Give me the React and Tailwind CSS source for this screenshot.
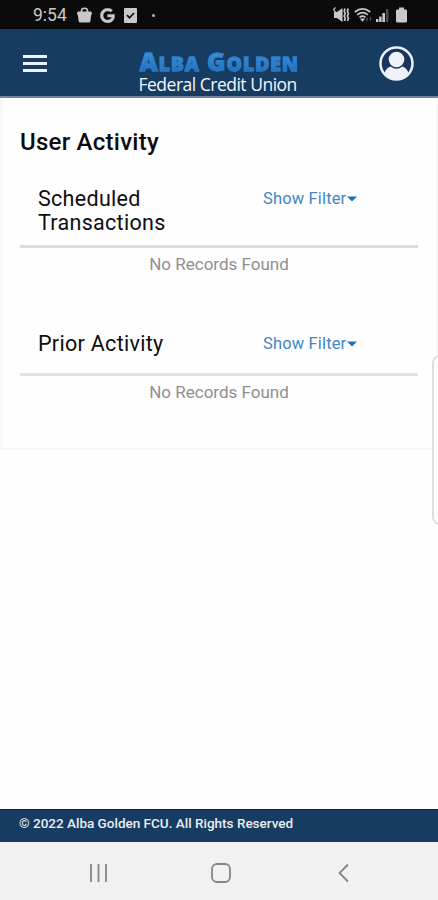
import { FaGoogle } from "react-icons/fa";

const StatusBar = () => {
  return (
    <div className="h-[29px] bg-[#0b0b0b] flex items-center justify-between pl-[33px] pr-[31px] pt-px text-[#c9c9c9]">
      <div className="flex items-center">
        <span className="w-[35px] pt-0.5 text-[17.5px] leading-none whitespace-nowrap">9:54</span>
        <svg className="ml-[9px]" width="15" height="16" viewBox="0 0 15 16" fill="currentColor">
          <path d="M0 6.2Q0 4.5 1.7 4.5H13.3Q15 4.5 15 6.2L14 9H1Z M1 9H14L13.4 14Q13.2 15.5 11.7 15.5H3.3Q1.8 15.5 1.6 14Z" />
          <path d="M4.5 5V3.8Q4.5 1.2 7.5 1.2T10.5 3.8V5" fill="none" stroke="currentColor" strokeWidth="1.6" />
        </svg>
        <FaGoogle className="ml-2 h-[15px] w-[15px]" stroke="currentColor" strokeWidth="16" />
        <svg className="ml-[9px]" width="13" height="15" viewBox="0 0 13 15">
          <rect width="13" height="15" rx="1" fill="currentColor" />
          <path d="M3 7.2L5.5 9.8L10 5" fill="none" stroke="#0b0b0b" strokeWidth="1.7" />
        </svg>
        <span className="ml-[15px] h-[3px] w-[3px] rounded-full bg-[#b5b5b5]" />
      </div>

      <div className="flex items-center">
        {/* Muted speaker */}
        <svg width="17" height="16" viewBox="0 0 17 16">
          <path d="M1 5H4L9.5 1V15L4 11H1Z" fill="currentColor" />
          <path d="M2.5 0.5L0.5 2.5L9 13.5" fill="none" stroke="currentColor" strokeWidth="1.2" />
          <path d="M12 1.5L11.2 4L12.2 6.5L11.2 9L12.2 11.5L11.4 14M15.2 1.5L14.4 4L15.4 6.5L14.4 9L15.4 11.5L14.6 14" fill="none" stroke="currentColor" strokeWidth="1.7" />
        </svg>
        {/* Wifi */}
        <svg className="ml-1" width="19" height="16" viewBox="0 0 19 16" fill="none" stroke="currentColor" strokeWidth="1.7">
          <path d="M0.8 5Q8.5-1.4 16.2 5M3.2 7.8Q8.5 3.6 13.8 7.8M5.6 10.3Q8.5 8 11.4 10.3" />
          <path d="M6.4 11.8L8.5 14.5L10.6 11.8Z" fill="currentColor" strokeWidth="0.5" />
          <path d="M13 10.5V14M16.5 13.5V10" strokeWidth="1.2" opacity="0.4" />
        </svg>
        {/* Signal */}
        <svg className="ml-[3px]" width="13" height="15" viewBox="0 0 13 15" fill="currentColor">
          <rect y="11" width="2.4" height="3" />
          <rect x="3.2" y="8.5" width="2.4" height="5.5" />
          <rect x="6.4" y="5" width="2.6" height="9" />
          <rect x="10" y="1" width="2.4" height="13" opacity="0.35" />
        </svg>
        {/* Battery */}
        <svg className="ml-[7px]" width="11" height="16" viewBox="0 0 11 16" fill="currentColor">
          <path d="M3 0.5H8V2.5H9.8Q11 2.5 11 3.7V14Q11 15.5 9.5 15.5H1.5Q0 15.5 0 14V3.7Q0 2.5 1.2 2.5H3Z" />
        </svg>
      </div>
    </div>
  );
};

const Header = () => {
  return (
    <header className="h-[69px] bg-[#173c61] border-b-2 border-[#7084a6] flex items-start justify-between pl-[23px] pr-6">
      <button className="mt-[26px] flex flex-col gap-[4px]" aria-label="Menu">
        <span className="h-[3px] w-6 bg-[#f1f1fa]" />
        <span className="h-[3px] w-6 bg-[#f1f1fa]" />
        <span className="h-[3px] w-6 bg-[#f1f1fa]" />
      </button>

      <div className="mt-[20px] ml-[9px] w-[160px] whitespace-nowrap">
        <div className="pl-[2px] font-['Open_Sans'] font-extrabold text-[25px] leading-6 tracking-[0.85px] bg-linear-to-b from-[#3f96df] to-[#1b69b8] bg-clip-text text-transparent [-webkit-text-stroke:0.8px_#2b7ecb]">
          A<span className="text-[19.5px]">LBA</span> G<span className="text-[19.5px]">OLDEN</span>
        </div>
        <div className="pl-px font-['Open_Sans'] text-[17.5px] leading-[17px] tracking-[-0.5px] text-[#f4f6fa]">
          Federal Credit Union
        </div>
      </div>

      <svg className="mt-[17px]" width="35" height="35" viewBox="0 0 35 35">
        <circle cx="17.5" cy="17.5" r="16" fill="#17365e" stroke="#eef1f7" strokeWidth="2.5" />
        <path d="M5.5 27Q7 22 11.5 20.5Q17.5 25 23.5 20.5Q28 22 29.5 27Q25 33 17.5 33T5.5 27Z" fill="#eef1f7" />
        <circle cx="17.5" cy="13.5" r="7.8" fill="#eef1f7" />
      </svg>
    </header>
  );
};

const ShowFilter = () => {
  return (
    <button className="flex items-center pt-px text-[16.5px] leading-6 text-[#4287c5] whitespace-nowrap">
      <span className="w-[84px] text-left tracking-[0.15px]">Show Filter</span>
      <svg width="10" height="6" viewBox="0 0 10 6">
        <path d="M0 0.5H10L5 5.5Z" fill="#1c70b8" />
      </svg>
    </button>
  );
};

const NavBar = () => {
  return (
    <nav className="h-[58px] bg-[#f1f1f1] text-[#858585]">
      <svg width="438" height="58" viewBox="0 0 438 58" fill="none" stroke="currentColor" strokeWidth="1.8">
        <path d="M91 22V40M98.5 22V40M106 22V40" />
        <rect x="212" y="22" width="18" height="18" rx="5" />
        <path d="M348 22.5L339.5 31L348 39.5" />
      </svg>
    </nav>
  );
};

const App = () => {
  return (
    <div className="relative h-[900px] w-[438px] overflow-hidden bg-[#fefefe] font-['Roboto',sans-serif] flex flex-col">
      <StatusBar />
      <Header />

      <main className="flex-1">
        <div className="h-[352px] border-x-2 border-b-2 border-[#f7f7f7] pl-[18px] pr-[18px] pt-[29px]">
          <h1 className="text-[24px] leading-[30px] font-medium tracking-[0.25px] text-[#0c0c0f]">User Activity</h1>

          <section className="mt-[29px]">
            <div className="flex items-start pl-[18px]">
              <h2 className="w-[225px] pt-px text-[21.5px] leading-6 tracking-[0.3px] text-[#0e0e10]">
                Scheduled<br />Transactions
              </h2>
              <ShowFilter />
            </div>
            <div className="mt-[10px] h-[3px] bg-[#dcdcdc]" />
            <p className="mt-1 text-center text-[17px] leading-6 text-[#8f8f8f]">No Records Found</p>
          </section>

          <section className="mt-[55px]">
            <div className="flex items-start pl-[18px]">
              <h2 className="w-[225px] pt-px text-[21.5px] leading-6 tracking-[0.3px] text-[#0e0e10]">Prior Activity</h2>
              <ShowFilter />
            </div>
            <div className="mt-[17px] h-[3px] bg-[#e1e1e1]" />
            <p className="mt-1 text-center text-[17px] leading-6 text-[#8f8f8f]">No Records Found</p>
          </section>
        </div>
      </main>

      <footer className="h-[33px] bg-[#173c61] border-t border-[#0d1c50] pl-[19px] text-[13.5px] leading-[26px] font-medium text-[#e9edf3] whitespace-nowrap">
        © 2022 Alba Golden FCU. All Rights Reserved
      </footer>
      <NavBar />

      {/* Edge panel handle */}
      <div className="absolute top-[355px] left-[432px] h-[170px] w-5 rounded-lg border-2 border-[#dedede] bg-[#fefefe]" />
    </div>
  );
};

export default App;
